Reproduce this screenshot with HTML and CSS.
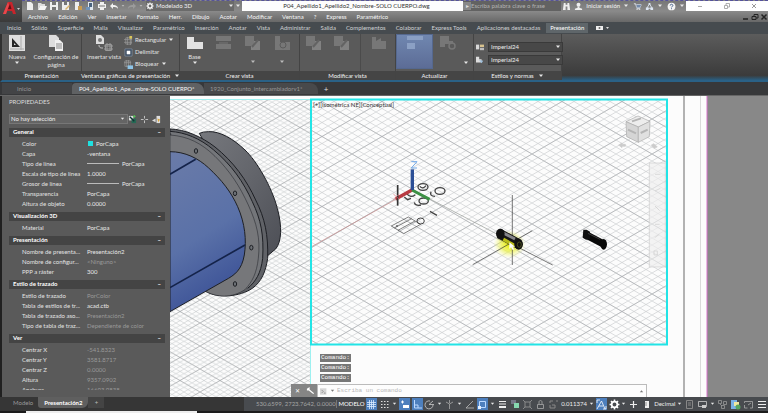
FILE: index.html
```html
<!DOCTYPE html>
<html lang="es">
<head>
<meta charset="utf-8">
<title>P04_Apellido1_Apellido2_Nombre-SOLO CUERPO.dwg</title>
<link rel="stylesheet" href="styles.css">
</head>
<body>
<svg class="defs" aria-hidden="true">
  <symbol id="caret" viewBox="0 0 6 4"><path d="M1 .5h4L3 3z" fill="currentColor"/></symbol>
  <symbol id="new" viewBox="0 0 10 10"><path d="M2 1h4l2 2v6H2z" fill="#eee"/></symbol>
  <symbol id="open" viewBox="0 0 10 10"><path d="M1 2h3l1 1h3v2H3L1 9z" fill="#ddd"/><path d="M3 5h7L8 9H1z" fill="#f5f5f5"/></symbol>
  <symbol id="save" viewBox="0 0 10 10"><path d="M1 1h8v8H1z" fill="#eee"/><path d="M3 1h4v3H3zM3 6h4v3H3z" fill="#777"/></symbol>
  <symbol id="saveas" viewBox="0 0 10 10"><path d="M1 1h7v8H1z" fill="#eee"/><path d="M3 1h3v3H3z" fill="#777"/><path d="M4 8l4-4 1 1-4 4z" fill="#d9b36a"/></symbol>
  <symbol id="cloud" viewBox="0 0 10 10"><path d="M2 1h4v8H2z" fill="#eee"/><path d="M5 5h4v4H5z" fill="#c89b52"/></symbol>
  <symbol id="mobile" viewBox="0 0 10 10"><path d="M3 1h5v8H3z" fill="#dfe6ee"/><path d="M4 2h3v4H4z" fill="#49627f"/><path d="M1 6h4v3H1z" fill="#6f93bb"/></symbol>
  <symbol id="print" viewBox="0 0 10 10"><path d="M3 1h4v2H3zM1 3h8v4H1zM3 6h4v3H3z" fill="#f0f0f0"/><path d="M2 5h6" stroke="#777"/></symbol>
  <symbol id="undo" viewBox="0 0 10 10"><path d="M1 5l3-3v2c3 0 5 1 5 4-1-2-3-2-5-2v2z" fill="#f2f2f2"/></symbol>
  <symbol id="redo" viewBox="0 0 10 10"><path d="M9 5L6 2v2C3 4 1 5 1 8c1-2 3-2 5-2v2z" fill="#9b9b9b"/></symbol>
  <symbol id="gear" viewBox="0 0 10 10"><circle cx="5" cy="5" r="2.6" fill="none" stroke="#fff" stroke-width="1.6"/><path d="M5 .5v1.6M5 7.9v1.6M.5 5h1.6M7.9 5h1.6M1.8 1.8l1.2 1.2M7 7l1.2 1.2M8.200 1.800L7 3M3 7L1.800 8.200" stroke="#fff" stroke-width="1.4"/></symbol>
  <symbol id="binoc" viewBox="0 0 10 10"><path d="M2 1h2v2h2V1h2l1 8H6V5H4v4H1z" fill="#eee"/></symbol>
  <symbol id="user" viewBox="0 0 10 10"><circle cx="5" cy="3" r="2.2" fill="#eee"/><path d="M4 5h2v1.500l3 1V9H1V7.500l3-1z" fill="#eee"/></symbol>
  <symbol id="cart" viewBox="0 0 10 10"><path d="M1 2h2l1 4h4l1-3H4M4 7.500h4" fill="none" stroke="#e9eef5"/><path d="M4 3h5L8 6H4z" fill="#7389a8"/><path d="M4 8h1v1H4zM7 8h1v1H7z" fill="#fff"/></symbol>
  <symbol id="share" viewBox="0 0 10 10"><path d="M5 2L2 7h6z" fill="none" stroke="#dde6f3"/><path d="M4 1h2v2H4zM1 6h3v3H1zM6 6h3v3H6z" fill="#dde6f3"/></symbol>
  <symbol id="help" viewBox="0 0 10 10"><circle cx="5" cy="5" r="4.300" fill="#f4f4f4"/><path d="M3.500 4c0-2 3-2 3 0 0 1-1.500 1-1.500 2M5 7v1" fill="none" stroke="#456089" stroke-width="1.100"/></symbol>
  <symbol id="dim-view" viewBox="0 0 18 16"><path d="M1 1h9v5h6v9H7v-4H1z" fill="#777"/><path d="M10 6h6v9H7v-4h3z" fill="#828282"/><path d="M8 12l6-7" stroke="#636363" stroke-width="2"/></symbol>
  <symbol id="s-grid" viewBox="0 0 11 11"><path d="M3.500 1v9M5.500 1v9M7.500 1v9M1 3.500h9M1 5.500h9M1 7.500h9" stroke="#dcecff" stroke-width=".8"/></symbol>
  <symbol id="s-dots" viewBox="0 0 11 11"><path d="M2 2.500h8M2 5.500h8M2 8.500h8" stroke="#ddd" stroke-width="1.200" stroke-dasharray="1.500 1.500"/></symbol>
  <symbol id="s-dyn" viewBox="0 0 11 11"><path d="M2 3h3M3.500 1.500v3" stroke="#fff"/><path d="M4 6h6v3H4z" fill="#fff"/></symbol>
  <symbol id="s-ortho" viewBox="0 0 11 11"><path d="M2.500 1v8H10M2.500 6H6v3" fill="none" stroke="#bcd9ff"/></symbol>
  <symbol id="s-polar" viewBox="0 0 11 11"><path d="M9 6a4 4 0 1 1-3-4M5 5.500h5M5 5.500L9 2" fill="none" stroke="#ccc" stroke-width=".8"/></symbol>
  <symbol id="s-iso" viewBox="0 0 11 11"><path d="M2 3l3.500 2L9 3M5.500 5v5M5.500 1v3" fill="none" stroke="#aaa" stroke-width=".8"/></symbol>
  <symbol id="s-angle" viewBox="0 0 11 11"><path d="M9 2L2 9h8" fill="none" stroke="#bbb" stroke-width=".8"/></symbol>
  <symbol id="s-snap" viewBox="0 0 11 11"><path d="M2.500 2.500h6v6h-6z" fill="none" stroke="#bcd9ff"/><path d="M1 7h3v3H1z" fill="#e4f0ff"/></symbol>
  <symbol id="s-lines" viewBox="0 0 11 11"><path d="M2 2.500h7M2 5h7" stroke="#eee"/><path d="M2 8h7" stroke="#eee" stroke-width="2"/></symbol>
  <symbol id="s-trans" viewBox="0 0 11 11"><path d="M1 1h5v4H1z" fill="#778"/><path d="M4 4h5v5H4z" fill="#86d7b0"/></symbol>
  <symbol id="s-cycle" viewBox="0 0 11 11"><path d="M3 3h5v5H3zM1 1l2 2M10 1L8 3M1 10l2-2M10 10L8 8" fill="none" stroke="#999" stroke-width=".8"/></symbol>
  <symbol id="s-lock" viewBox="0 0 11 11"><path d="M2.500 5.500h6v4h-6zM4 5V3c0-2 3-2 3 0v2" fill="none" stroke="#aaa" stroke-width=".8"/></symbol>
  <symbol id="s-max" viewBox="0 0 11 11"><path d="M2 4V2h3M2 6v3h5V6H4M8 2h2" fill="none" stroke="#888"/></symbol>
  <symbol id="s-ann" viewBox="0 0 11 11"><path d="M1 1h3M1 1v3M10 10H7M10 10V7M1 10L5.500 2 9 10M3 7h4" fill="none" stroke="#fff" stroke-width=".8"/></symbol>
  <symbol id="s-plus" viewBox="0 0 11 11"><path d="M5.500 2v7M2 5.500h7" stroke="#eee" stroke-width="1.200"/></symbol>
  <symbol id="s-rule" viewBox="0 0 11 11"><path d="M4 2h4v7H4z" fill="#eee"/><path d="M4 4h2M4 6h2" stroke="#555" stroke-width=".6"/></symbol>
  <symbol id="s-prop" viewBox="0 0 11 11"><path d="M2.500 1.500h6v8h-6zM4 4h3M4 6h3" fill="none" stroke="#888"/></symbol>
  <symbol id="s-ui" viewBox="0 0 11 11"><path d="M1.500 2.500h8v5h-8z" fill="none" stroke="#ccc" stroke-width=".8"/><path d="M5 6h4v3H5z" fill="#ccc"/></symbol>
  <symbol id="s-iso2" viewBox="0 0 11 11"><path d="M1.500 1.500h3v3h-3zM6.500 2.500h3v3h-3zM4.500 6.500h3v3h-3zM3 5l2 2" fill="none" stroke="#999" stroke-width=".8"/></symbol>
  <symbol id="s-hw" viewBox="0 0 11 11"><path d="M1 1h6v9H1z" fill="#7ab1e6"/><path d="M4 3h5v4H4z" fill="#f0e7a0"/><circle cx="8" cy="8" r="2.500" fill="#57a55f"/></symbol>
  <symbol id="s-full" viewBox="0 0 11 11"><path d="M1.500 4V2.500h8V9H7M1.500 6v3h3M8 4L5 6" fill="none" stroke="#aaa" stroke-width=".8"/></symbol>
  <symbol id="s-menu" viewBox="0 0 11 11"><path d="M2 2.500h8M2 5.500h8M2 8.500h8" stroke="#eee"/></symbol>
</svg>

<header class="top">
  <button class="logo" aria-label="Menú de la aplicación">
    <svg viewBox="0 0 22 22"><path d="M3 14L8 2h4l4 12h-3l-1-3H7l-1 3z" fill="#c8242b"/><path d="M8 9l2-5 1.500 5z" fill="#5d1216"/><path d="M3 14L8 2l1 3-3 9z" fill="#e8474b"/><path d="M17 8h3l-1.500 2z" fill="#ccc"/></svg>
  </button>
  <div class="titlebar">
    <div class="quick">
      <button aria-label="Nuevo"><svg><use href="#new"/></svg></button>
      <button aria-label="Abrir"><svg><use href="#open"/></svg></button>
      <button aria-label="Guardar"><svg><use href="#save"/></svg></button>
      <button aria-label="Guardar como"><svg><use href="#saveas"/></svg></button>
      <button aria-label="Abrir desde web"><svg><use href="#cloud"/></svg></button>
      <button aria-label="Guardar en web"><svg><use href="#mobile"/></svg></button>
      <button aria-label="Trazar"><svg><use href="#print"/></svg></button>
      <button aria-label="Deshacer"><svg><use href="#undo"/></svg></button>
      <button class="tiny" aria-label="Lista de deshacer"><svg><use href="#caret"/></svg></button>
      <button aria-label="Rehacer"><svg><use href="#redo"/></svg></button>
      <button class="tiny" aria-label="Lista de rehacer"><svg><use href="#caret"/></svg></button>
    </div>
    <div class="workspace">
      <svg><use href="#gear"/></svg>
      <select aria-label="Espacio de trabajo"><option>Modelado 3D</option></select>
      <svg class="car"><use href="#caret"/></svg>
    </div>
    <button class="more" aria-label="Personalizar"><svg class="car"><use href="#caret"/></svg></button>
    <h1>P04_Apellido1_Apellido2_Nombre-SOLO CUERPO.dwg</h1>
    <div class="search"><span>▸</span><input aria-label="Buscar" placeholder="Escriba palabra clave o frase"></div>
    <div class="account">
      <button aria-label="Buscar"><svg><use href="#binoc"/></svg></button>
      <button class="signin"><svg><use href="#user"/></svg>Iniciar sesión</button>
      <svg class="car"><use href="#caret"/></svg>
      <button aria-label="Tienda"><svg><use href="#cart"/></svg></button>
      <button aria-label="A360"><svg><use href="#share"/></svg></button>
      <svg class="car"><use href="#caret"/></svg>
      <button aria-label="Ayuda"><svg><use href="#help"/></svg></button>
      <svg class="car"><use href="#caret"/></svg>
    </div>
    <div class="winbtns">
      <button aria-label="Minimizar"><svg viewBox="0 0 8 8"><path d="M2 4.500h4" stroke="#aaa" fill="none"/></svg></button>
      <button aria-label="Restaurar"><svg viewBox="0 0 8 8"><path d="M1.500 3.500h3v3h-3zM3 3V1.500h3.500V5H5" stroke="#999" fill="none" stroke-width=".8"/></svg></button>
      <button aria-label="Cerrar"><svg viewBox="0 0 8 8"><path d="M2 2l4 4M6 2L2 6" stroke="#999" fill="none"/></svg></button>
    </div>
  </div>
  <nav class="menubar">
    <a href="#">Archivo</a><a href="#">Edición</a><a href="#">Ver</a><a href="#">Insertar</a><a href="#">Formato</a><a href="#">Herr.</a><a href="#">Dibujo</a><a href="#">Acotar</a><a href="#">Modificar</a><a href="#">Ventana</a><a href="#">?</a><a href="#">Express</a><a href="#">Paramétrico</a>
    <div class="docbtns">
      <button aria-label="Minimizar dibujo"><svg viewBox="0 0 8 8"><path d="M1 6h5" stroke="#222" stroke-width="1.500"/></svg></button>
      <button aria-label="Restaurar dibujo"><svg viewBox="0 0 8 8"><path d="M1 3.500h4v3H1zM3 3V1.500h4V5H5" stroke="#222" fill="none"/></svg></button>
      <button aria-label="Cerrar dibujo"><svg viewBox="0 0 8 8"><path d="M1.500 1.500l5 5M6.500 1.500l-5 5" stroke="#222" stroke-width="1.500"/></svg></button>
    </div>
  </nav>
</header>

<nav class="ribbon-tabs">
  <a href="#">Inicio</a><a href="#">Sólido</a><a href="#">Superficie</a><a href="#">Malla</a><a href="#">Visualizar</a><a href="#">Paramétrico</a><a href="#">Inserción</a><a href="#">Anotar</a><a href="#">Vista</a><a href="#">Administrar</a><a href="#">Salida</a><a href="#">Complementos</a><a href="#">Colaborar</a><a href="#">Express Tools</a><a href="#">Aplicaciones destacadas</a><a href="#" class="on">Presentación</a>
  <button aria-label="Minimizar cinta"><svg viewBox="0 0 14 6"><path d="M0 1h7v4H0z" fill="#eee"/><circle cx="3.500" cy="3" r="1" fill="#666"/><path d="M10 2h3l-1.500 2z" fill="#ddd"/></svg></button>
</nav>

<section class="ribbon">
  <div class="panel p1">
    <div class="tools">
      <button class="big"><svg viewBox="0 0 18 16"><path d="M1 0h16v16H1z" fill="#dedede"/><path d="M4 3v9h8z" fill="#252525"/><path d="M6 8v2h2z" fill="#dedede"/><path d="M13 1v14M2 14h14" stroke="#aaa"/></svg>Nueva<svg class="car"><use href="#caret"/></svg></button>
      <button class="big wide"><svg viewBox="0 0 18 16"><path d="M2 0h7l3 3v9H2z" fill="#ddd"/><path d="M8 5h5l3 3v8H8z" fill="#f0f0f0"/><path d="M9 9h6M9 11h6M9 13h6" stroke="#888"/></svg>Configuración de página</button>
    </div>
    <h2>Presentación</h2>
  </div>
  <div class="panel p2">
    <div class="tools">
      <button class="big mid"><svg viewBox="0 0 18 16"><path d="M1 0h5l3 3v6H1z" fill="#ddd"/><circle cx="5" cy="5" r="2" fill="#777"/><path d="M4 10c0 3 2 3 4 3" fill="none" stroke="#ccc"/><path d="M10.500 9.500h6v6h-6zM9 11h9M9 14h9M12 8v8M15 8v8" fill="none" stroke="#999"/></svg>Insertar vista</button>
      <div class="stack">
        <button><svg viewBox="0 0 10 10"><path d="M2 2h6v7H2zM0 4h9M0 7h9M4 1v9M7 1v9" fill="none" stroke="#999" stroke-width=".8"/><path d="M6 0h3v3H6z" fill="#d9c65a"/></svg>Rectangular<svg class="car"><use href="#caret"/></svg></button>
        <button><svg viewBox="0 0 10 10"><path d="M1 1h8v8H1z" fill="#3b4b5e" stroke="#8391a3" stroke-width=".8"/><path d="M3 3h4v4H3z" fill="#fff"/></svg>Delimitar</button>
        <button><svg viewBox="0 0 10 10"><path d="M1 1h6v6H1zM0 3h8M3 0v8M5 0v8" fill="none" stroke="#999" stroke-width=".8"/><path d="M4 6h6v4H4z" fill="#8ec5e8"/></svg>Bloquear<svg class="car"><use href="#caret"/></svg></button>
      </div>
    </div>
    <h2>Ventanas gráficas de presentación <svg class="car"><use href="#caret"/></svg></h2>
  </div>
  <div class="panel p3">
    <div class="tools">
      <button class="big"><svg viewBox="0 0 18 16"><path d="M1 2h7v5h9v7H1z" fill="#e2e2e2"/></svg>Base<svg class="car"><use href="#caret"/></svg></button>
      <button class="big" disabled aria-label="Proyectada"><svg viewBox="0 0 18 16"><path d="M1 1h15v5H1zM1 9h15v5H1z" fill="#777"/><path d="M4 8h9" stroke="#777"/></svg></button>
      <button class="big" disabled aria-label="Sección"><svg><use href="#dim-view"/></svg><svg class="car"><use href="#caret"/></svg></button>
      <button class="big" disabled aria-label="Detalle"><svg viewBox="0 0 18 16"><path d="M2 1h5v6h10v8H2z" fill="#777"/><circle cx="10" cy="10" r="3" fill="none" stroke="#5b5b5b"/></svg><svg class="car"><use href="#caret"/></svg></button>
    </div>
    <h2>Crear vista</h2>
  </div>
  <div class="panel p4">
    <div class="tools">
      <button class="big" disabled aria-label="Editar vista"><svg><use href="#dim-view"/></svg></button>
      <button class="big" disabled aria-label="Editar componentes"><svg><use href="#dim-view"/></svg></button>
      <i class="sep"></i>
      <button class="big" disabled aria-label="Dibujo de símbolos"><svg viewBox="0 0 18 16"><path d="M2 2h4v4l5-3v3h5v8H2z" fill="#777"/></svg></button>
    </div>
    <h2>Modificar vista</h2>
  </div>
  <div class="panel p5">
    <div class="tools">
      <button class="big hot" aria-label="Actualización automática"><svg viewBox="0 0 18 16"><path d="M1 0h16v4H1zM1 7h8v6H1z" fill="#8ba0c4"/></svg></button>
      <button class="big" disabled aria-label="Actualizar vista"><svg viewBox="0 0 18 16"><path d="M1 1h9v5h4v3H6v3H1z" fill="#777"/><circle cx="13" cy="11" r="3" fill="none" stroke="#777" stroke-width="1.500"/></svg></button>
      <svg class="car low"><use href="#caret"/></svg>
    </div>
    <h2>Actualizar</h2>
  </div>
  <div class="panel p6">
    <div class="tools styles">
      <label><svg viewBox="0 0 10 10"><path d="M0 2h4v6H0z" fill="#d8d8d8"/><path d="M5 2h5v3H5z" fill="#d8c28e"/><path d="M5 6h5v3H5z" fill="#bbb"/></svg><select aria-label="Estilo de detalle"><option>Imperial24</option></select><svg class="car"><use href="#caret"/></svg></label>
      <label><svg viewBox="0 0 10 10"><path d="M0 1h4v3h3v4H0z" fill="#ddd"/><path d="M4 5l5 1-2 3z" fill="#9fc0dd"/></svg><select aria-label="Estilo de sección"><option>Imperial24</option></select><svg class="car"><use href="#caret"/></svg></label>
    </div>
    <h2>Estilos y normas <svg class="car"><use href="#caret"/></svg></h2>
  </div>
</section>

<nav class="file-tabs">
  <a href="#" class="start">Inicio</a>
  <a href="#" class="on">P04_Apellido1_Ape...mbre-SOLO CUERPO*</a>
  <a href="#" class="other">1920_Conjunto_intercambiadorv1*</a>
  <button aria-label="Nuevo dibujo">+</button>
</nav>

<main>
  <aside class="props">
    <h2>PROPIEDADES</h2>
    <div class="pick">
      <select aria-label="Selección"><option>No hay selección</option></select>
      <svg class="car"><use href="#caret"/></svg>
      <button aria-label="Alternar PICKADD"><svg viewBox="0 0 10 10"><path d="M1 1h5v5H1z" fill="#ddd"/><path d="M4 4h5v5H4z" fill="#256a55"/><path d="M2 2l5 5" stroke="#133" stroke-width="1.500"/><path d="M7 0v3M5.500 1.500h3" stroke="#5c5"/></svg></button>
      <button aria-label="Designar objetos"><svg viewBox="0 0 10 10"><path d="M5 1v8M1 5h8" stroke="#ccc"/><path d="M4 4h2v2H4z" fill="#5a5a5a"/></svg></button>
      <button aria-label="Selección rápida"><svg viewBox="0 0 10 10"><path d="M5 1h4v8H5z" fill="#ddd"/><path d="M0 6l4-2v4z" fill="#ddd"/><path d="M6 4l3 1-2 3z" fill="#d8a53e"/></svg></button>
    </div>
    <div class="scroll">
      <table>
        <tbody>
        <tr class="sec"><th colspan="2"><span>General<b>–</b></span></th></tr>
        <tr><th>Color</th><td><i class="swatch"></i>PorCapa</td></tr>
        <tr><th>Capa</th><td>-ventana</td></tr>
        <tr><th>Tipo de línea</th><td><i class="line"></i>PorCapa</td></tr>
        <tr><th>Escala de tipo de línea</th><td>1.0000</td></tr>
        <tr><th>Grosor de línea</th><td><i class="line"></i>PorCapa</td></tr>
        <tr><th>Transparencia</th><td>PorCapa</td></tr>
        <tr><th>Altura de objeto</th><td>0.0000</td></tr>
        <tr class="sec"><th colspan="2"><span>Visualización 3D<b>–</b></span></th></tr>
        <tr><th>Material</th><td>PorCapa</td></tr>
        <tr class="sec"><th colspan="2"><span>Presentación<b>–</b></span></th></tr>
        <tr><th>Nombre de presenta...</th><td>Presentación2</td></tr>
        <tr><th>Nombre de configur...</th><td class="off">&lt;Ninguno&gt;</td></tr>
        <tr><th>PPP a ráster</th><td>300</td></tr>
        <tr class="sec"><th colspan="2"><span>Estilo de trazado<b>–</b></span></th></tr>
        <tr><th>Estilo de trazado</th><td class="off">PorColor</td></tr>
        <tr><th>Tabla de estilos de tr...</th><td>acad.ctb</td></tr>
        <tr><th>Tabla de trazado aso...</th><td class="off">Presentación2</td></tr>
        <tr><th>Tipo de tabla de traz...</th><td class="off">Dependiente de color</td></tr>
        <tr class="sec"><th colspan="2"><span>Ver<b>–</b></span></th></tr>
        <tr><th>Centrar X</th><td class="off">-541.8323</td></tr>
        <tr><th>Centrar Y</th><td class="off">3581.8717</td></tr>
        <tr><th>Centrar Z</th><td class="off">0.0000</td></tr>
        <tr><th>Altura</th><td class="off">9357.0902</td></tr>
        <tr><th>Anchura</th><td class="off">16693.9838</td></tr>
        </tbody>
      </table>
    </div>
  </aside>

  <section class="stage">
    <svg class="drawing" viewBox="170 95 598 301" preserveAspectRatio="xMinYMin slice" aria-hidden="true">
      <defs>
        <pattern id="g1" width="8" height="4.600" patternUnits="userSpaceOnUse"><path d="M0 0L8 4.600M0 4.600L8 0" stroke="#b9bdc0" stroke-width=".5"/></pattern>
        <pattern id="g2" width="40" height="23" patternUnits="userSpaceOnUse"><path d="M0 0L40 23M0 23L40 0" stroke="#9a9da0" stroke-width=".5"/></pattern>
        <pattern id="g3" x="412" y="188" width="12" height="7" patternUnits="userSpaceOnUse"><path d="M0 0L12 7M0 7L12 0" stroke="#b9bdc0" stroke-width=".5"/></pattern>
        <pattern id="g4" x="412" y="188" width="60" height="35" patternUnits="userSpaceOnUse"><path d="M0 0L60 35M0 35L60 0" stroke="#a3a6a9" stroke-width=".6"/></pattern>
        <linearGradient id="blue" x1="0" y1="0" x2="0.300" y2="1"><stop offset="0" stop-color="#6a7ba8"/><stop offset=".6" stop-color="#5a71a8"/><stop offset="1" stop-color="#3d5397"/></linearGradient>
        <linearGradient id="steel" x1="0" y1="0" x2="1" y2="1"><stop offset="0" stop-color="#76787d"/><stop offset=".5" stop-color="#63656b"/><stop offset="1" stop-color="#4d4f56"/></linearGradient>
        <radialGradient id="glow"><stop offset="0" stop-color="#e8ee00"/><stop offset=".5" stop-color="#eaf03c" stop-opacity=".7"/><stop offset="1" stop-color="#f3f780" stop-opacity="0"/></radialGradient>
      </defs>
      <path d="M170 95h537v301H170z" fill="#fcfcfc"/>
      <path d="M170 98h140v298H170z" fill="url(#g1)"/>
      <path d="M170 98h140v298H170z" fill="url(#g2)"/>
      <path d="M170 98.500h140M310.500 344v52" stroke="#9df0f0"/>
      <g transform="translate(165 94) scale(.3333)" stroke="#1d1f24" stroke-width="3">
        <path d="M103 115Q115 110 130 110C165 108 205 132 240 165C275 198 320 275 337 340C352 395 350 440 332 462L308 482Z" fill="url(#steel)"/>
        <path d="M15 102C60 103 110 125 150 156C205 200 245 255 272 315C300 370 310 420 308 490C302 530 290 560 262 580C225 605 160 612 120 588L15 400Z" fill="#606267"/>
        <path d="M15 109C60 112 105 130 145 164C200 210 235 260 262 320C288 375 297 420 293 490C288 535 272 560 248 580" fill="#74767a"/>
        <path d="M15 120C70 124 110 145 150 184C195 228 225 275 250 330C275 385 287 430 280 490C275 535 262 560 240 584C200 610 155 608 120 588L15 400Z" fill="#76777a" stroke-width="1.500"/>
        <path d="M15 170C60 170 100 190 130 218C170 255 198 290 218 335C240 385 245 435 238 480C230 525 210 540 180 556L15 650Z" fill="url(#blue)"/>
        <path d="M15 238L92 193M15 578L240 450" stroke="#14234a" stroke-width="5"/>
        <g fill="#6c7075" stroke-width="3"><ellipse cx="93" cy="168" rx="5" ry="7"/><ellipse cx="210" cy="295" rx="5" ry="7"/><ellipse cx="259" cy="458" rx="5" ry="7"/><ellipse cx="210" cy="567" rx="5" ry="7"/></g>
      </g>
      <path d="M311 99h355v245H311z" fill="#fcfcfc"/>
      <path d="M311 99h355v245H311z" fill="url(#g3)"/>
      <path d="M311 99h355v245H311z" fill="url(#g4)"/>
      <path d="M311 246L400 196" stroke="#c98b8b" stroke-width=".7"/>
      <path d="M430 198L512 241" stroke="#9a9d9a" stroke-width=".7"/>
      <g transform="translate(305 94) scale(.3333)" fill="none" stroke="#444" stroke-width="4">
        <ellipse cx="354" cy="276" rx="15" ry="10"/><path d="M345 274q8 10 18-2"/>
        <ellipse cx="405" cy="288" rx="15" ry="10"/><ellipse cx="356" cy="318" rx="14" ry="9"/>
        <path d="M305 296q12 15 26 3M298 306l10 8 10-4M328 322q2 12 20 8M378 290q-5 14 12 14M375 349l21 12"/>
        <path d="M259 393L310 366L347 388L296 416ZM268 399L320 371M279 406L330 378" stroke-width="2"/><circle cx="276" cy="393" r="2" stroke-width="2"/>
        <ellipse cx="347" cy="378" rx="11" ry="9" stroke-width="3"/>
        <path d="M321 285L272 312" stroke="#b83b42" stroke-width="10"/><path d="M321 285L374 313" stroke="#3d9145" stroke-width="9"/><path d="M322 285V223" stroke="#2c4f96" stroke-width="10"/>
        <path d="M278 270v62" stroke="#333" stroke-width="5"/><path d="M265 297l18 16M283 297l-18 16" stroke="#d9767b" stroke-width="2"/>
        <path d="M319 200h17l-17 19h17" stroke="#6fa8e8" stroke-width="3"/>
      </g>
      <g transform="translate(460 190) scale(.3333)" fill="none">
        <ellipse cx="148" cy="160" rx="48" ry="42" fill="url(#glow)"/>
        <path d="M157 12v210M38 221L217 119M157 160L278 222" stroke="#333" stroke-width="2"/>
        <path d="M118 128L178 160" stroke="#171717" stroke-width="30"/><path d="M126 124L165 144" stroke="#85858a" stroke-width="9"/><path d="M130 145L165 164" stroke="#b9bd18" stroke-width="10"/>
        <ellipse cx="121" cy="128" rx="13" ry="15" fill="#111"/><ellipse cx="176" cy="160" rx="13" ry="16" fill="#111"/><ellipse cx="178" cy="161" rx="6" ry="8" stroke="#656a22" stroke-width="2"/>
        <path d="M148 154v20l5-5 5 8 4-2-4-8h7z" fill="#fff"/>
        <path d="M375 130L432 160" stroke="#080808" stroke-width="22"/><path d="M370 116h10l10 6v22l-12 2-10-6z" fill="#111"/><ellipse cx="431" cy="160" rx="10" ry="16" fill="#080808"/><path d="M384 127l36 18" stroke="#555" stroke-width="2"/>
      </g>
      <g transform="translate(600 90) scale(.3333)" stroke="#aaa" stroke-width="2">
        <path d="M78 92L114 75L150 91L115 108Z" fill="#ededed"/><path d="M78 92L115 108V154L80 137Z" fill="#d5d5d5"/><path d="M150 91L115 108V154L148 137Z" fill="#e0e0e0"/>
        <path d="M96 91l27-9M84 116l24 11M122 126l21-10" stroke="#b5b5b5" stroke-width="6"/>
        <path d="M56 162l10-6v4h10v6H66v4zM172 168l-10-10-8 4 8 10z" fill="#ccc" stroke="#ccc"/>
        <path d="M148 216h48v312h-48z" fill="#eee" fill-opacity=".65" stroke="#ccc"/>
        <path d="M165 250h16M165 300l16-8M165 345l14 14M165 400h14M164 440l14-10M162 480h10v12h-10z" fill="none" stroke="#ccc"/>
      </g>
      <path d="M310 98.500h357V343.500H311V98" fill="none" stroke="#22e4e6" stroke-width="2"/>
      <path d="M684 95v301" stroke="#b2b2b2" stroke-width="2"/><path d="M700.500 95v301" stroke="#ccc" stroke-width=".7"/>
      <path d="M707 95h61v301h-61z" fill="#888"/><path d="M707 95v301" stroke="#d873cb"/>
    </svg>
    <p class="view-label">[+][Isométrica NE][Conceptual]</p>
    <div class="history"><span>Comando:</span><span>Comando:</span><span>Comando:</span></div>
    <div class="command">
      <button aria-label="Cerrar">✕</button>
      <button aria-label="Personalizar"><svg viewBox="0 0 10 10"><path d="M1 3l3-2v3l5 4-1 1-5-4H1z" fill="#fff"/></svg></button>
      <div class="entry"><svg viewBox="0 0 10 8"><path d="M0 0h8v8H0z" fill="#d6d6d6"/><path d="M2 2l2 2-2 2M5 6h2" fill="none" stroke="#888"/></svg><svg class="car"><use href="#caret"/></svg><input aria-label="Línea de comando" placeholder="Escriba un comando"><svg class="car up"><use href="#caret"/></svg></div>
    </div>
  </section>
</main>

<footer>
  <nav class="layouts"><a href="#">Modelo</a><a href="#" class="on">Presentación2</a><button aria-label="Nueva presentación">+</button></nav>
  <div class="status">
    <span class="coords">530.6599, 2723.7642, 0.0000</span>
    <button class="space">MODELO</button>
    <div class="toggles">
      <button class="on" aria-label="Rejilla"><svg><use href="#s-grid"/></svg></button>
      <button aria-label="Forzcursor"><svg><use href="#s-dots"/></svg></button>
      <svg class="car"><use href="#caret"/></svg>
      <button class="on" aria-label="Entrada dinámica"><svg><use href="#s-dyn"/></svg></button>
      <button class="on" aria-label="Orto"><svg><use href="#s-ortho"/></svg></button>
      <button aria-label="Polar"><svg><use href="#s-polar"/></svg></button>
      <svg class="car"><use href="#caret"/></svg>
      <button aria-label="Isométrico"><svg><use href="#s-iso"/></svg></button>
      <svg class="car"><use href="#caret"/></svg>
      <button aria-label="Rastreo"><svg><use href="#s-angle"/></svg></button>
      <button class="on" aria-label="Referencia a objetos"><svg><use href="#s-snap"/></svg></button>
      <svg class="car"><use href="#caret"/></svg>
      <button aria-label="Grosor de línea"><svg><use href="#s-lines"/></svg></button>
      <button aria-label="Transparencia"><svg><use href="#s-trans"/></svg></button>
      <button aria-label="Ciclo de selección"><svg><use href="#s-cycle"/></svg></button>
      <button aria-label="Bloquear ventana"><svg><use href="#s-lock"/></svg></button>
      <button aria-label="Maximizar ventana"><svg><use href="#s-max"/></svg></button>
      <span>0.011374</span>
      <svg class="car"><use href="#caret"/></svg>
      <button class="on" aria-label="Anotación"><svg><use href="#s-ann"/></svg></button>
      <button aria-label="Espacio de trabajo"><svg><use href="#gear"/></svg></button>
      <svg class="car"><use href="#caret"/></svg>
      <button aria-label="Supervisor"><svg><use href="#s-plus"/></svg></button>
      <button aria-label="Unidades"><svg><use href="#s-rule"/></svg></button>
      <span>Decimal</span>
      <svg class="car"><use href="#caret"/></svg>
      <button aria-label="Propiedades rápidas"><svg><use href="#s-prop"/></svg></button>
      <button aria-label="Bloquear interfaz"><svg><use href="#s-ui"/></svg></button>
      <svg class="car"><use href="#caret"/></svg>
      <button aria-label="Aislar objetos"><svg><use href="#s-iso2"/></svg></button>
      <button aria-label="Rendimiento gráfico"><svg><use href="#s-hw"/></svg></button>
      <button aria-label="Pantalla limpia"><svg><use href="#s-full"/></svg></button>
      <button aria-label="Personalización"><svg><use href="#s-menu"/></svg></button>
    </div>
  </div>
  <div class="taskbar"></div>
</footer>
</body>
</html>
```
FILE: styles.css
```css
* { box-sizing: border-box; margin: 0; padding: 0; }
html, body { height: 100%; }
body {
  display: flex;
  flex-direction: column;
  overflow: hidden;
  background: #3a3b3d;
  color: #e2e2e2;
  font: 6px/8px Lato, "Open Sans", sans-serif;
  white-space: nowrap;
}
.defs { position: absolute; width: 0; height: 0; }
a { color: inherit; text-decoration: none; }
button, select, input { font: inherit; color: inherit; background: none; border: 0; outline: 0; appearance: none; }
h1, h2 { font: inherit; }
svg { display: block; flex: none; }
.car { width: 6px; height: 4px; color: #e8e8e8; }

/* title and menu bars */
.top { display: grid; grid-template-columns: 22px 1fr; grid-template-rows: 11px 11px; background: #858585; }
.logo { grid-row: 1 / 3; background: linear-gradient(#555, #3a3a3a); overflow: hidden; }
.logo svg { width: 22px; height: 22px; }
.titlebar { display: flex; align-items: stretch; background: linear-gradient(#777, #8a8a8a); border-top: 1px dashed #56539b; }
.titlebar button { display: flex; align-items: center; justify-content: center; }
.quick { display: flex; align-items: center; width: 124px; padding-left: 2px; }
.quick button { width: 12px; }
.quick svg { width: 10px; height: 10px; }
.quick .tiny { width: 6px; }
.quick .tiny svg { width: 4px; height: 4px; color: #bbb; }
.workspace { display: flex; align-items: center; gap: 2px; width: 88px; background: #6a6a6a; }
.workspace svg { width: 8px; height: 8px; }
.workspace select { flex: 1; color: #f0f0f0; }
.workspace .car, .account .car { width: 6px; height: 4px; }
.more { width: 8px; }
.titlebar h1 { flex: 1; background: #fdfdfd; color: #333; text-align: center; line-height: 10px; padding-left: 8px; }
.search { display: flex; align-items: center; width: 98px; background: #626262; color: #ddd; overflow: hidden; }
.search span { width: 8px; background: #888; text-align: center; }
.search input { flex: 1; min-width: 0; }
.search input::placeholder { color: #b4b4b4; opacity: 1; }
.account { display: flex; align-items: center; justify-content: space-between; width: 125px; padding: 0 1px; color: #f1f1f1; }
.account svg { width: 9px; height: 9px; }
.account .signin { gap: 3px; }
.winbtns { display: flex; justify-content: space-around; width: 82px; background: #fff; }
.winbtns svg, .docbtns svg { width: 8px; height: 8px; }
.menubar { display: flex; align-items: center; gap: 10px; padding-left: 6px; background: linear-gradient(#8a8a8a, #686868); color: #f6f6f6; }
.docbtns { display: flex; gap: 1px; margin-left: auto; }

/* ribbon */
.ribbon-tabs { display: flex; align-items: center; gap: 10px; height: 12px; padding-left: 7px; background: #464b4f; color: #d0d2d4; }
.ribbon-tabs .on { background: #5f666a; color: #fff; padding: 1px 4px; margin: 0 -2px 0 -4px; }
.ribbon-tabs button svg { width: 14px; height: 6px; }
.ribbon { display: flex; height: 48px; border-left: 2px solid #303030; border-bottom: 2px solid #2a6186; background: linear-gradient(#5c5c5c, #3b3b3b 90%, #2a5e80); }
.panel { display: flex; flex-direction: column; border-right: 1px solid #444; background: #5a5a5a; }
.p1 { width: 80px; }
.p2 { width: 98px; }
.p3 { width: 120px; }
.p4 { width: 96px; }
.p5 { width: 78px; }
.p6 { width: 88px; }
.tools { flex: 1; display: flex; align-items: flex-start; min-height: 0; }
.panel h2 { display: flex; justify-content: center; align-items: center; gap: 4px; height: 9px; background: #454545; color: #f2f2f2; }
.big { display: flex; flex-direction: column; align-items: center; width: 30px; padding-top: 1px; }
.big svg:first-child { width: 18px; height: 16px; margin-bottom: 2px; }
.big:disabled .car { margin-top: 7px; color: #bbb; }
.wide { width: 48px; white-space: normal; }
.mid { width: 40px; padding-left: 4px; }
.p2 .tools { gap: 2px; }
.stack { display: flex; flex-direction: column; gap: 4px; padding-top: 2px; }
.stack button { display: flex; align-items: center; gap: 2px; height: 8px; }
.stack svg:first-child { width: 9px; height: 9px; }
.p3 .big { width: 29px; }
.p4 .big { width: 28px; }
.sep { align-self: stretch; width: 1px; margin: 0 4px; background: #4b4b4b; }
.p5 .hot { width: 37px; height: 35px; background: linear-gradient(#7087b0, #5c6c96); border: 1px solid #55688e; }
.low { margin-top: 27px; }
.styles { flex-direction: column; gap: 2px; padding: 7px 0 0 2px; }
.styles label { display: flex; align-items: center; gap: 4px; width: 100%; height: 11px; }
.styles label svg:first-child { width: 8px; height: 8px; }
.styles select { flex: 1; min-width: 0; height: 10px; padding-left: 2px; background: #484848; border: 1px solid #3a3a3a; color: #eee; }
.styles .car { margin-left: -12px; }

/* drawing tabs */
.file-tabs { display: flex; height: 14px; padding: 1px 0 1px 2px; background: #37383a; color: #989898; line-height: 12px; border-bottom: 1px solid #666; }
.file-tabs .start { width: 70px; padding-left: 15px; background: #434446; }
.file-tabs .on { width: 132px; padding-left: 7px; background: #5f6163; color: #f6f6f6; border-radius: 4px 8px 0 0; }
.file-tabs .other { width: 114px; padding-left: 6px; background: #48494b; border-radius: 0 8px 0 0; }
.file-tabs button { width: 16px; color: #ddd; font-size: 8px; }

/* workspace */
main { flex: 1; display: flex; min-height: 0; }
.props { display: flex; flex-direction: column; width: 170px; padding: 1px 5px 0 7px; background: #5a5a5a; border-left: 2px solid #202020; }
.props h2 { height: 9px; margin: 1px 0 6px; color: #dcdcdc; }
.pick { display: flex; align-items: center; gap: 3px; height: 12px; color: #eee; }
.pick select { width: 119px; height: 10px; padding-left: 1px; background: #646464; border: 1px solid #777; color: #eee; }
.pick .car { margin-left: -11px; width: 5px; }
.pick button svg { width: 9px; height: 9px; }
.scroll { flex: 1; min-height: 0; margin: 0 0 7px; overflow: hidden; }
table { width: 156px; border-collapse: collapse; table-layout: fixed; }
tr { height: 10px; }
th, td { height: 10px; font-weight: 400; text-align: left; }
th { width: 76px; padding-left: 13px; }
td { color: #e8e8e8; }
td.off { color: #999; }
tr.sec, .sec th { height: 14px; padding: 0; }
.sec span { display: flex; justify-content: space-between; height: 9px; padding: 0 4px; background: #444; color: #fff; font-weight: 700; }
.swatch { display: inline-block; width: 5px; height: 5px; margin: 0 3px 0 1px; background: #1fe0e0; }
.line { display: inline-block; width: 32px; height: 1px; margin: 0 3px 2px 0; background: #bbb; }

.stage { position: relative; flex: 1; min-width: 0; overflow: hidden; background: #888; }
.drawing { width: 100%; height: 100%; }
.view-label { position: absolute; left: 143px; top: 5px; color: #333; }
.history { position: absolute; left: 150px; bottom: 15px; display: flex; flex-direction: column; gap: 2px; font-family: "Liberation Mono", monospace; }
.history span { height: 8px; padding: 0 1px; background: #777; color: #fff; }
.command { position: absolute; left: 121px; right: 121px; bottom: 0; display: flex; height: 13px; background: #858585; }
.command button { width: 13px; display: flex; align-items: center; justify-content: center; color: #fff; }
.command button svg { width: 9px; height: 9px; }
.entry { flex: 1; display: flex; align-items: center; gap: 2px; padding: 0 2px; background: #fdfdfd; border: 1px solid #bbb; border-bottom: 0; }
.entry svg:first-child { width: 8px; height: 7px; }
.entry input { flex: 1; font-family: "Liberation Mono", monospace; }
.entry input::placeholder { color: #b8b8b8; opacity: 1; }
.entry .car { width: 5px; color: #777; }
.up { transform: rotate(180deg); }

/* bottom bars */
footer { display: grid; grid-template-columns: 244px 1fr; grid-template-rows: 14px 2px; background: #1c1c1c; }
.layouts { display: flex; padding-left: 8px; background: #363636; color: #999; line-height: 11px; }
.layouts a { height: 11px; padding: 0 5px; }
.layouts .on { padding: 0 6px; background: #5f5f5f; color: #fff; font-weight: 700; border-radius: 0 0 6px 3px; }
.layouts button { width: 16px; height: 11px; background: #444; color: #bbb; }
.status { display: flex; align-items: center; background: #484b4f; }
.coords { width: 92px; padding-left: 12px; color: #a5a5a5; }
.space { width: 30px; color: #fff; text-align: center; border-left: 1px solid #777; }
.toggles { flex: 1; display: flex; align-items: center; justify-content: space-between; padding-right: 1px; color: #eee; }
.toggles button { width: 11px; height: 12px; display: flex; align-items: center; }
.toggles button svg { width: 11px; height: 11px; }
.toggles .on { background: #4d7fbd; }
.toggles .car { width: 5px; }
.taskbar { height: 2px; margin: 0 47px 0 26px; background: #eee; }
```
